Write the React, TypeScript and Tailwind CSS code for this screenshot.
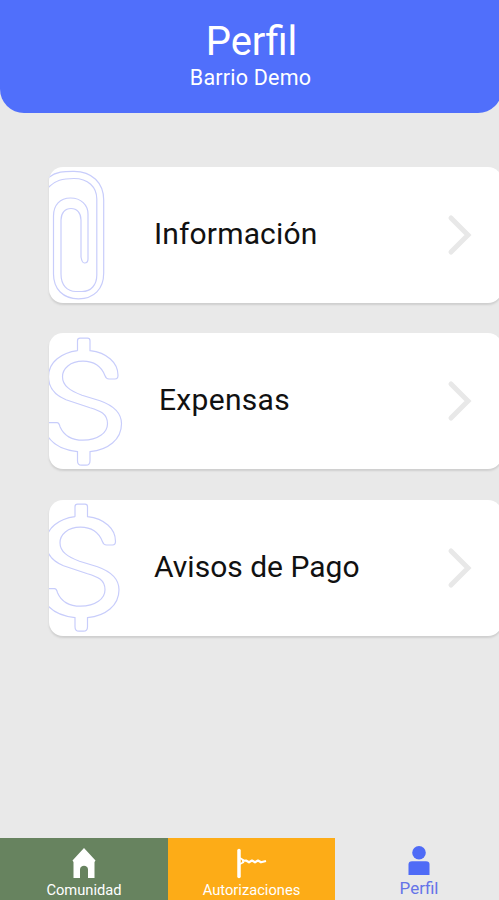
import React from 'react'

type MenuCardProps = {
  title: string
  titleClass: string
  icon: React.ReactNode
}

type TabProps = {
  label: string
  className: string
  labelClass: string
  icon: React.ReactNode
}

const PaperclipOutline = () => (
  <svg
    viewBox="49 167 76 136"
    className="h-[136px] w-[76px] shrink-0"
    fill="none"
    stroke="#c8cdfb"
    strokeWidth="1.2"
  >
    <path d="M48 178C56 171 66 171.3 74 171.3C92 171.3 103.7 183 103.7 200V273C103.7 289 94 298.8 78.500 298.800C63 298.800 53.500 289 53.500 274V216C53.500 205 60 198 70.500 198C81 198 88 205 88 214V259Q88 263 84.500 263Q82 263 81 257V220C81 213 77 208.500 71 208.500C65 208.500 61 213 61 220V274C61 285 67 291.500 76 291.500H82C91 291.500 96.800 285 96.800 275V199C96.800 187 88 178.500 74 178.500C63 178.500 55 180 48 188" />
  </svg>
)

type DollarOutlineProps = { viewBox: string }

const DollarOutline: React.FC<DollarOutlineProps> = ({ viewBox }) => (
  <svg
    viewBox={viewBox}
    className="h-[136px] w-[76px] shrink-0"
    fill="none"
    stroke="#c8cdfb"
    strokeWidth="1.2"
  >
    <path d="M77.500 351V341Q77.500 338.400 80 338.400H87.500Q90 338.400 90 341V351C107 353 118 363 118 375.500Q118 379.300 115 379.300H109Q106 379.300 105 376C101 366 94 361.500 83 361.500C70 361.500 62.500 369 62.500 377C62.500 386 70 391 82 395.500L100 401C114 406 121.500 413 121.500 424C121.500 440 108 450 90 452V461Q90 465.500 86 465.500H81.500Q77.500 465.500 77.500 461V452C64 450.500 54 446 48 437M48 423H57Q59 423 60 427C64 436 72 440.500 83 440.500C98 440.500 107.500 433 107.500 424C107.500 414 100 411 90 408L66 400C54 395 48.500 387 48.500 377C48.500 362 62 353 77.500 351" />
  </svg>
)

const MenuCard: React.FC<MenuCardProps> = ({ title, titleClass, icon }) => {
  return (
    <div className="flex h-[136px] w-[453px] items-center overflow-hidden rounded-[14px] bg-white shadow-[0_2px_2px_#cfcfcf]">
      {icon}
      <span className={`grow whitespace-nowrap pb-[3px] text-[30px] text-[#111] ${titleClass}`}>
        {title}
      </span>
      <svg viewBox="0 0 26 42" className="mr-[29px] h-[42px] w-[26px] shrink-0" fill="none">
        <path d="M4 4L21 21L4 38" stroke="#e8e8e8" strokeWidth="5" strokeLinecap="round" />
      </svg>
    </div>
  )
}

const HomeIcon = () => (
  <svg viewBox="0 0 26 32" className="h-8 w-[26px]" fill="#fff">
    <path d="M13 0L1.500 12.500L2.500 14V30H9V21.500C9 16.500 17 16.500 17 21.500V30H23.500V14L24.500 12.500Z" />
  </svg>
)

const BarrierIcon = () => (
  <svg viewBox="0 0 34 32" className="h-8 w-[34px]" fill="none" stroke="#fff">
    <path d="M4 2.500V28.500" strokeWidth="3.500" strokeLinecap="round" />
    <path d="M5 10L9 12.500M5 16L9 14" strokeWidth="1.500" />
    <path
      d="M7 13L11 12.500L14 14.300L17 12.500L20 14.300L23 12.500L26 14.300L31 13"
      strokeWidth="2.200"
      strokeLinejoin="round"
    />
  </svg>
)

const PersonIcon = () => (
  <svg viewBox="0 0 24 32" className="h-8 w-6" fill="#4f6bf6">
    <circle cx="12" cy="6.800" r="6.800" />
    <path d="M1.500 29V18.500Q1.500 15.300 5 15.300H19Q22.500 15.300 22.500 18.500V29Z" />
  </svg>
)

const Tab: React.FC<TabProps> = ({ label, className, labelClass, icon }) => (
  <div className={`flex flex-col items-center ${className}`}>
    {icon}
    <span className={`whitespace-nowrap leading-5 ${labelClass}`}>{label}</span>
  </div>
)

const App = () => {
  return (
    <div className="flex h-[900px] w-[499px] flex-col overflow-hidden bg-[#e9e9e9] font-[Roboto,sans-serif]">
      <header className="flex h-[112.5px] w-[502px] shrink-0 flex-col items-center rounded-b-[24px] bg-[#506ffb] pt-[18px] text-white">
        <h1 className="pl-px text-[40px] leading-[48px]">Perfil</h1>
        <p className="pr-px text-[21.5px] leading-6 tracking-[0.2px]">Barrio Demo</p>
      </header>

      <main className="flex grow flex-col gap-[30.250px] pl-[49px] pt-[54.500px]">
        <MenuCard
          title="Información"
          titleClass="pl-[29px] tracking-[0.15px]"
          icon={<PaperclipOutline />}
        />
        <MenuCard
          title="Expensas"
          titleClass="pl-[34px] tracking-[0.3px]"
          icon={<DollarOutline viewBox="49 333.300 76 136" />}
        />
        <MenuCard
          title="Avisos de Pago"
          titleClass="pl-[29px]"
          icon={<DollarOutline viewBox="51.500 334.300 76 136" />}
        />
      </main>

      <nav className="grid h-[62px] shrink-0 grid-cols-[168px_167px_164px]">
        <Tab
          label="Comunidad"
          className="bg-[#67835f] pt-[9.5px]"
          labelClass="text-[14.7px] text-white"
          icon={<HomeIcon />}
        />
        <Tab
          label="Autorizaciones"
          className="bg-[#fdac17] pt-[9.5px]"
          labelClass="text-[14.7px] text-white"
          icon={<BarrierIcon />}
        />
        <Tab
          label="Perfil"
          className="pl-1 pt-2"
          labelClass="text-[17px] text-[#6574e8]"
          icon={<PersonIcon />}
        />
      </nav>
    </div>
  )
}

export default App
